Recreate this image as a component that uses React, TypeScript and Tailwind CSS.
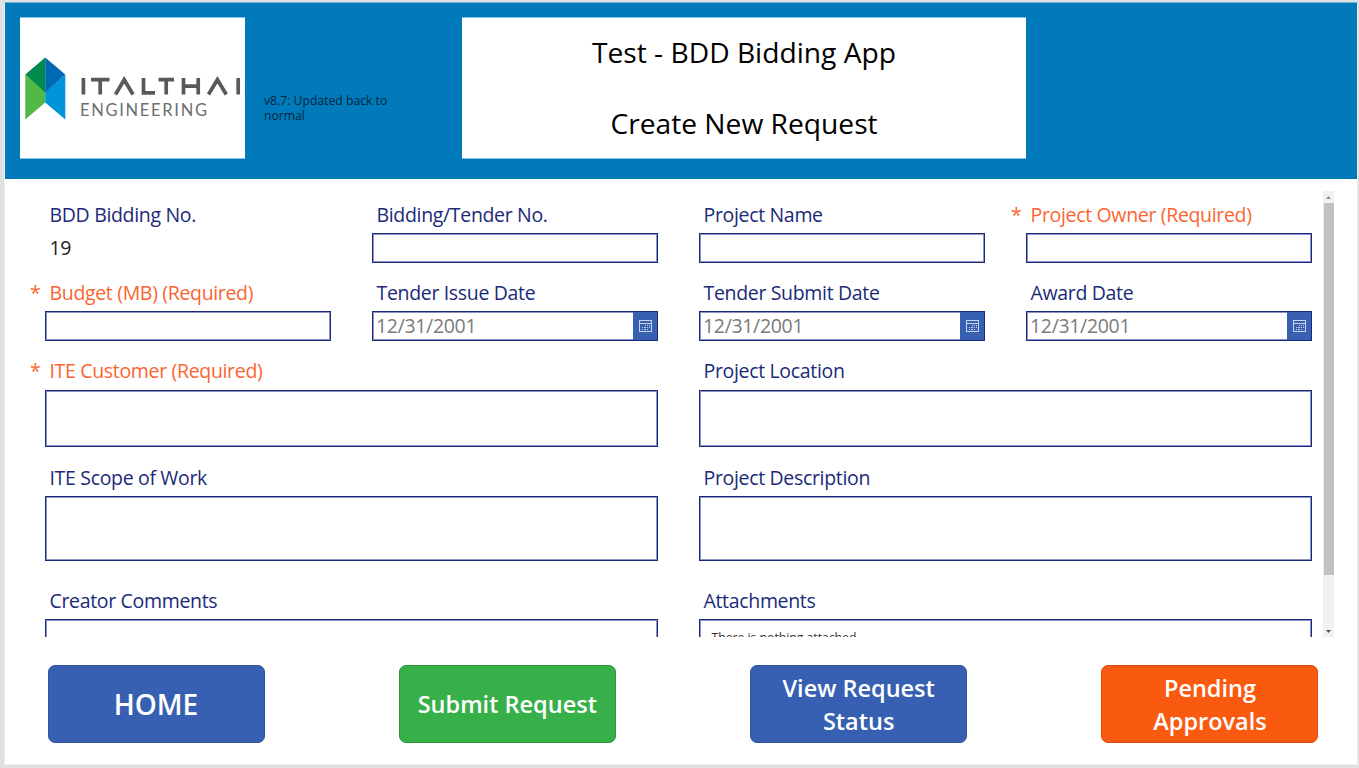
import type { ReactNode } from "react";

const box = "border border-[#1b297d] bg-white shadow-[inset_0_0_0_1px_#8c94c2]";

function Label({ text, required }: { text: string; required?: boolean }) {
  return (
    <div className={`relative flex h-[38px] items-center pt-px pl-[4.500px] text-[19.500px] leading-[26px] tracking-[-0.33px] whitespace-nowrap ${required ? "text-[#fb6431]" : "text-[#1b2a78]"}`}>
      {required && <span className="absolute left-[-15px]">*</span>}
      <span>{text}</span>
    </div>
  );
}

function Field({ text, required, wide, children }: { text: string; required?: boolean; wide?: boolean; children: ReactNode }) {
  return (
    <div className={wide ? "w-[613px]" : "w-[286px]"}>
      <Label text={text} required={required} />
      {children}
    </div>
  );
}

function TextInput() {
  return <div className={`h-[30px] ${box}`} />;
}

function CalendarIcon() {
  return (
    <svg width="13" height="12" viewBox="0 0 13 12" fill="none" stroke="#c9d5ee" strokeWidth="1">
      <rect x="0.5" y="0.5" width="12" height="11" />
      <path d="M1 3.500h11" />
      <path d="M6 5.500h1M8 5.500h1M10 5.500h1M3 7.500h1M5 7.500h2M8 7.500h1M10 7.500h1M3 9.500h1M5 9.500h2M8 9.500h1" />
    </svg>
  );
}

function DateInput() {
  return (
    <div className={`flex h-[30px] items-center justify-between ${box}`}>
      <span className="pl-[3px] text-[19.500px] leading-[26px] tracking-[-0.33px] text-[#7b7b7b]">12/31/2001</span>
      <span className="flex h-full w-[24px] items-center justify-center bg-[#3860b2]">
        <CalendarIcon />
      </span>
    </div>
  );
}

function Logo() {
  return (
    <svg width="226" height="141" viewBox="0 0 226 141">
      <path d="M5.300 57.500 25.200 75V85.500L5.300 102.500z" fill="#52b848" />
      <path d="M45.300 57.500 25.200 75V85.500L45.300 102.500z" fill="#0095da" />
      <path d="M25.200 40.500 5.300 57.500 25.200 75.500z" fill="#008a4b" />
      <path d="M25.200 40.500 45.300 57.500 25.200 75.500z" fill="#0069b4" />
      <g stroke="#58595b" strokeWidth="3.700" fill="none">
        <path d="M63.400 61v16.500M71 62.700h18.500M80.200 62v15.500M95.500 77.500 104.200 62.700 113 77.500M123.500 61v14.800h11.500M138.500 62.700H154M146.200 62v15.500M163.500 61v16.500M178.200 61v16.500M163.500 69.200h14.700M188.500 77.500 197.400 62.700 206.300 77.500M218.200 61v16.500" />
      </g>
      <text x="60" y="98.500" textLength="127" fontFamily="Lato, sans-serif" fontSize="16.500" fill="#6d6e71">ENGINEERING</text>
    </svg>
  );
}

function ActionButton({ color, children }: { color: string; children: ReactNode }) {
  return (
    <button className={`flex h-[78px] w-[217px] items-center justify-center rounded-[7px] border text-center font-semibold text-white ${color}`}>
      {children}
    </button>
  );
}

export default function App() {
  return (
    <div className="h-[768px] w-[1359px] overflow-hidden bg-[#e0e0e0] pt-[2px] pr-px pb-[3px] pl-[4px] font-['Open_Sans',sans-serif]">
      <div className="flex h-full flex-col border border-[#efefef] border-t-[#70b2d8] bg-white">
        <header className="flex h-[176px] shrink-0 bg-[#007abb] pt-[14px] pl-[15px]">
          <div className="h-[142px] w-[225px] border-y border-[#8ac2e0] bg-white bg-clip-padding">
            <div className="-mt-px"><Logo /></div>
          </div>
          <p className="ml-[19px] w-[150px] pt-[77px] text-[12.200px] leading-[14.500px] text-[#03263c]">v8.7: Updated back to normal</p>
          <div className="ml-[48px] flex h-[142px] w-[564px] flex-col border-y border-[#8ac2e0] bg-white text-center text-[28.200px] text-black">
            <h1 className="flex h-[70px] items-center justify-center pb-px">Test - BDD Bidding App</h1>
            <h2 className="flex h-[70px] items-center justify-center pt-px">Create New Request</h2>
          </div>
        </header>

        <main className="mt-[12px] flex h-[446px] shrink-0 overflow-hidden">
          <div className="ml-[40px] flex w-[1267px] shrink-0 flex-col pt-[4px]">
            <div className="flex h-[78px] shrink-0 gap-[41px]">
              <Field text="BDD Bidding No.">
                <div className="flex h-[30px] items-center pl-[4.500px] text-[19.500px] tracking-[-0.33px] text-[#222]">19</div>
              </Field>
              <Field text="Bidding/Tender No."><TextInput /></Field>
              <Field text="Project Name"><TextInput /></Field>
              <Field text="Project Owner (Required)" required><TextInput /></Field>
            </div>
            <div className="flex h-[78px] shrink-0 gap-[41px]">
              <Field text="Budget (MB) (Required)" required><TextInput /></Field>
              <Field text="Tender Issue Date"><DateInput /></Field>
              <Field text="Tender Submit Date"><DateInput /></Field>
              <Field text="Award Date"><DateInput /></Field>
            </div>
            <div className="flex h-[107px] shrink-0 gap-[41px]">
              <Field text="ITE Customer (Required)" required wide><div className={`mt-px h-[57px] ${box}`} /></Field>
              <Field text="Project Location" wide><div className={`mt-px h-[57px] ${box}`} /></Field>
            </div>
            <div className="flex h-[123px] shrink-0 gap-[41px]">
              <Field text="ITE Scope of Work" wide><div className={`h-[65px] ${box}`} /></Field>
              <Field text="Project Description" wide><div className={`h-[65px] ${box}`} /></Field>
            </div>
            <div className="flex shrink-0 gap-[41px]">
              <Field text="Creator Comments" wide><div className={`h-[65px] ${box}`} /></Field>
              <Field text="Attachments" wide>
                <div className={`h-[65px] pt-[10px] pl-[11.500px] text-[12.200px] leading-[16px] text-[#333] ${box}`}>There is nothing attached.</div>
              </Field>
            </div>
          </div>
          <div className="ml-[11px] flex w-[11px] shrink-0 flex-col items-center bg-[#f1f1f1]">
            <div className="flex h-[12px] items-center">
              <svg width="5" height="3" viewBox="0 0 5 3"><path d="M2.500 0 5 3H0z" fill="#8a8a8a" /></svg>
            </div>
            <div className="h-[372px] w-[10px] bg-[#c1c1c1]" />
            <div className="mt-auto flex h-[12px] items-center">
              <svg width="5" height="3" viewBox="0 0 5 3"><path d="M0 0h5L2.500 3z" fill="#505050" /></svg>
            </div>
          </div>
        </main>

        <footer className="mt-[28px] ml-[42.500px] flex w-[1271px] justify-between">
          <ActionButton color="bg-[#3860b2] border-[#2f5299]"><span className="text-[28px]">HOME</span></ActionButton>
          <ActionButton color="bg-[#37b04a] border-[#2c9440]"><span className="pt-px text-[23.500px]">Submit Request</span></ActionButton>
          <ActionButton color="bg-[#3860b2] border-[#2f5299]"><span className="w-[180px] pt-px text-[23.500px] leading-[33px]">View Request Status</span></ActionButton>
          <ActionButton color="bg-[#fa5a10] border-[#d44e12]"><span className="w-[140px] pt-px text-[23.500px] leading-[33px]">Pending Approvals</span></ActionButton>
        </footer>
      </div>
    </div>
  );
}
